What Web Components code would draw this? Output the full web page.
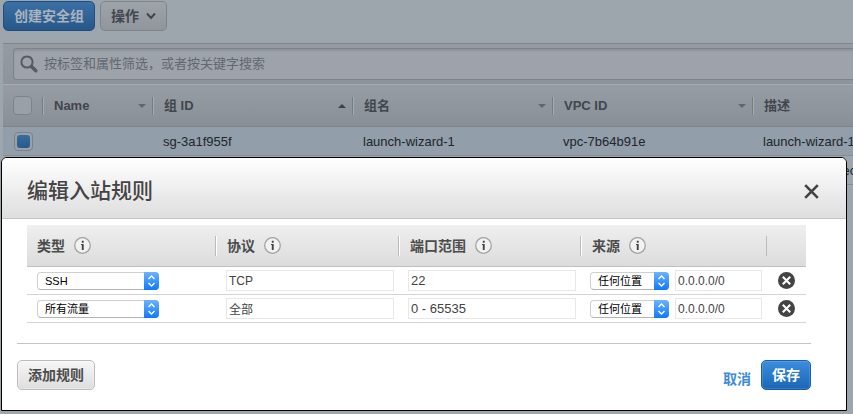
<!DOCTYPE html>
<html lang="zh-CN">
<head>
<meta charset="utf-8">
<title>安全组</title>
<style>
  html, body { margin: 0; height: 100%; }
  body {
    overflow: hidden;
    background: #9ea6ad;
    color: #444;
    font: 13px/20px "Liberation Sans", "Noto Sans CJK SC", sans-serif;
  }
</style>
</head>
<body>
<security-page>
  <action-button slot="actions" tone="dim-primary">创建安全组</action-button>
  <action-button slot="actions" tone="dim" menu>操作</action-button>
  <group-table></group-table>
</security-page>
<rule-dialog heading="编辑入站规则">
  <rule-table></rule-table>
  <action-button slot="start">添加规则</action-button>
  <a slot="end" href="#cancel">取消</a>
  <action-button slot="end" tone="primary">保存</action-button>
</rule-dialog>

<script>
const attach = (el, html) => {
  const t = document.createElement('template');
  t.innerHTML = html;
  el.attachShadow({ mode: 'open' }).append(t.content.cloneNode(true));
};

customElements.define('action-button', class extends HTMLElement {
  connectedCallback() {
    const chevron = this.hasAttribute('menu')
      ? '<svg width="10" height="8" viewBox="0 0 10 8" fill="none" stroke="currentColor" stroke-width="2"><path d="M1 1.5 5 6 9 1.5"/></svg>' : '';
    attach(this, `
      <style>
        :host { display: inline-block; }
        button {
          box-sizing: border-box; height: 30px; padding: 0 10px;
          display: flex; align-items: center; gap: 7px;
          border: 1px solid #bbb; border-radius: 5px;
          background: linear-gradient(#f6f6f6, #dedede);
          box-shadow: inset 0 0 0 1px #ffffff55;
          color: #4c4c4c; font: 700 14px/20px "Liberation Sans", "Noto Sans CJK SC", sans-serif;
          white-space: nowrap;
        }
        :host([tone=primary]) button {
          border-color: #1561ad; background: linear-gradient(#3c8ddd, #1a66b5); color: #fff;
          box-shadow: inset 0 0 0 1px #ffffff22;
        }
        :host([tone=dim]) button {
          border-color: #7f848b; background: linear-gradient(#9fa3aa, #91969d); color: #42474d;
          box-shadow: none;
        }
        :host([tone=dim-primary]) button {
          border-color: #1d4f82; background: linear-gradient(#3b70a6, #265788); color: #a9b3bd;
          box-shadow: none;
        }
      </style>
      <button type="button"><slot></slot>${chevron}</button>`);
  }
});

customElements.define('security-page', class extends HTMLElement {
  connectedCallback() {
    attach(this, `
      <style>
        :host { display: block; padding: 1px 0 0 3px; overflow: hidden; }
        nav { display: flex; gap: 5px; margin-bottom: 12px; }
        .bar { padding: 4px 0 4px 10px; border-top: 1px solid #7f868e; background: linear-gradient(#959ba3, #8d949b); }
        label {
          display: flex; align-items: center; gap: 6px; box-sizing: border-box; height: 32px; padding-left: 6px;
          border: 1px solid #7d838a; border-right: 0; border-radius: 4px 0 0 4px; background: #9ea3ab;
          box-shadow: inset 0 2px 2px #8e939a;
        }
        input {
          flex: 1; min-width: 0; padding: 0; border: 0; outline: 0; background: none; color: #62676d;
          font: 13px/20px "Liberation Sans", "Noto Sans CJK SC", sans-serif;
        }
        input::placeholder { color: #62686f; opacity: 1; }
      </style>
      <nav><slot name="actions"></slot></nav>
      <div class="bar">
        <label>
          <svg width="18" height="18" viewBox="0 0 18 18" fill="none" stroke="#555b62" stroke-linecap="round">
            <circle cx="7" cy="7" r="5.6" stroke-width="2"/><path d="M11.5 11.5 15.8 15.8" stroke-width="3.4"/>
          </svg>
          <input type="text" aria-label="搜索" placeholder="按标签和属性筛选，或者按关键字搜索">
        </label>
      </div>
      <slot></slot>`);
  }
});

customElements.define('group-table', class extends HTMLElement {
  connectedCallback() {
    const head = (name, sort) => `<th><div><span>${name}</span>${sort ? `<i class="${sort}"></i>` : ''}</div></th>`;
    attach(this, `
      <style>
        :host { display: block; }
        table { width: 100%; border-collapse: separate; border-spacing: 0; table-layout: fixed; }
        col.tick { width: 39px; } col.name { width: 110px; } col.wide { width: 200px; }
        th, td { box-sizing: border-box; padding: 0; text-align: left; white-space: nowrap; }
        th {
          height: 43px; background: linear-gradient(#989da5, #888f97);
          border-top: 1px solid #a4aab1; border-bottom: 1px solid #7d848b;
          color: #41464c; font-weight: 700;
        }
        th div {
          display: flex; align-items: center; justify-content: space-between; box-sizing: border-box; height: 18px;
          padding: 0 6px 0 11px; border-left: 1px solid #767c83; box-shadow: inset 1px 0 #a7acb3;
        }
        i { width: 0; border: 4px solid transparent; }
        i.down { border-top-color: #61666d; border-bottom: 0; }
        i.up { border-bottom-color: #3c4147; border-top: 0; }
        td { height: 29px; padding: 1px 0 0 11px; border-bottom: 1px solid #858d95; color: #20262c; }
        tr.on td { background: #929ea9; }
        th:first-child { padding-left: 10px; }
        input {
          appearance: none; display: grid; place-content: center; box-sizing: border-box;
          width: 19px; height: 19px; margin: 0; border: 1px solid #7d838a; border-radius: 4px;
          background: #9aa0a7;
        }
        input:checked::before { content: ""; width: 13px; height: 13px; border-radius: 3px; background: linear-gradient(#386d9f, #28598b); }
      </style>
      <table>
        <colgroup><col class="tick"><col class="name"><col class="wide"><col class="wide"><col class="wide"><col></colgroup>
        <thead><tr><th><input type="checkbox" aria-label="全选"></th>
          ${head('Name', 'down')}${head('组 ID', 'up')}${head('组名', 'down')}${head('VPC ID', 'down')}${head('描述')}</tr></thead>
        <tbody>
          <tr class="on"><td><input type="checkbox" checked aria-label="sg-3a1f955f"></td><td></td><td>sg-3a1f955f</td><td>launch-wizard-1</td><td>vpc-7b64b91e</td><td>launch-wizard-1</td></tr>
          <tr><td></td><td></td><td></td><td></td><td></td><td>default VPC security group</td></tr>
        </tbody>
      </table>`);
  }
});

customElements.define('rule-dialog', class extends HTMLElement {
  connectedCallback() {
    attach(this, `
      <style>
        :host {
          position: absolute; left: 1px; right: 6px; top: 157px; overflow: hidden;
          border: 1px solid #000; border-radius: 6px 6px 0 0; background: #fff;
        }
        header {
          display: flex; align-items: center; justify-content: space-between; box-sizing: border-box; height: 61px;
          padding: 6px 27px 0 25px; border-bottom: 1px solid #c4c4c4; background: linear-gradient(#fff, #dedede);
        }
        h2 { margin: 0; color: #444; font: 500 21px/30px "Liberation Sans", "Noto Sans CJK SC", sans-serif; }
        header button { display: flex; padding: 0; border: 0; background: none; }
        section { padding: 6px 40px 20px 25px; }
        footer {
          display: flex; align-items: center; justify-content: space-between; margin: 0 35px 0 15px; padding: 16px 0 20px;
          border-top: 1px solid #c4c4c4;
        }
        footer div { display: flex; align-items: flex-end; gap: 10px; }
        ::slotted(a) { color: #3d8bdb; font: 700 14px/20px "Noto Sans CJK SC", sans-serif; padding-bottom: 2px; text-decoration: none; }
      </style>
      <header>
        <h2></h2>
        <button type="button" aria-label="关闭"><svg width="15" height="15" viewBox="0 0 15 15" stroke="#444" stroke-width="2.6"><path d="M1.2 1.2 13.8 13.8M13.8 1.2 1.2 13.8"/></svg></button>
      </header>
      <section><slot></slot></section>
      <footer><slot name="start"></slot><div><slot name="end"></slot></div></footer>`);
    this.shadowRoot.querySelector('h2').textContent = this.getAttribute('heading');
  }
});

customElements.define('pick-list', class extends HTMLElement {
  connectedCallback() {
    attach(this, `
      <style>
        :host { display: grid; height: 18px; }
        select, svg { grid-area: 1 / 1; }
        select {
          appearance: none; box-sizing: border-box; width: 100%; height: 18px; margin: 0; padding: 0 16px 0 7px;
          border: 1px solid #cfcfcf; border-bottom-color: #b4b4b4; border-radius: 4px; background: #fff; color: #000;
          font: 11px/16px "Liberation Sans", "Noto Sans CJK SC", sans-serif;
        }
        svg { justify-self: end; pointer-events: none; }
      </style>
      <select aria-label="${this.getAttribute('label')}"><option>${this.getAttribute('value')}</option></select>
      <svg width="15" height="18" viewBox="0 0 15 18">
        <defs><linearGradient id="g" x2="0" y2="1"><stop stop-color="#6cb3fa"/><stop offset="1" stop-color="#0f79fd"/></linearGradient></defs>
        <path d="M0 0H11a4 4 0 0 1 4 4V14a4 4 0 0 1-4 4H0Z" fill="url(#g)"/>
        <path d="M4.5 7 7.5 4 10.5 7M4.5 11 7.5 14 10.5 11" fill="none" stroke="#fff" stroke-width="1.4"/>
      </svg>`);
  }
});

customElements.define('info-mark', class extends HTMLElement {
  connectedCallback() {
    attach(this, `
      <style>:host { display: block; height: 17px; } svg { display: block; }</style>
      <svg width="17" height="17" viewBox="0 0 17 17">
        <circle cx="8.5" cy="8.5" r="7.8" fill="#f2f2f2" stroke="#a2a2a2" stroke-width="1.3"/>
        <path d="M7.8 3.8h1.9v1.9H7.8ZM7 7h2.7v6H7.8V8H7Z" fill="#444"/>
      </svg>`);
  }
});

customElements.define('rule-table', class extends HTMLElement {
  connectedCallback() {
    const head = n => `<th><div>${n}<info-mark></info-mark></div></th>`;
    const row = (type, proto, port) => `
      <tr>
        <td><pick-list class="type" label="类型" value="${type}"></pick-list></td>
        <td><input class="small" aria-label="协议" value="${proto}"></td>
        <td><input aria-label="端口范围" value="${port}"></td>
        <td><div class="source"><pick-list label="来源" value="任何位置"></pick-list><input class="small" aria-label="来源地址" value="0.0.0.0/0"></div></td>
        <td><button type="button" aria-label="删除"><svg width="17" height="17" viewBox="0 0 17 17"><circle cx="8.5" cy="8.5" r="8.5" fill="#444"/><path d="M4.8 4.8 12.2 12.2M12.2 4.8 4.8 12.2" stroke="#fff" stroke-width="2.1"/></svg></button></td>
      </tr>`;
    attach(this, `
      <style>
        :host { display: block; }
        table { width: 100%; border-collapse: separate; border-spacing: 0; table-layout: fixed; }
        col.a { width: 188px; } col.c { width: 182px; } col.d { width: 186px; } col.e { width: 40px; }
        th, td { box-sizing: border-box; padding: 0; text-align: left; }
        th { height: 42px; background: linear-gradient(#efefef, #dcdcdc); border-bottom: 1px solid #c0c0c0; color: #4c4c4c; font-weight: 700; font-size: 14px; }
        th div {
          display: flex; align-items: center; gap: 9px; box-sizing: border-box; height: 20px; padding-left: 11px;
          border-left: 1px solid #bbb; box-shadow: inset 1px 0 #fff;
        }
        th:first-child div { padding-left: 10px; border: 0; box-shadow: none; }
        th:last-child div { box-shadow: none; }
        td { height: 28px; padding: 0 4px 0 10px; border-bottom: 1px solid #d4d4d4; }
        td:nth-child(2) { padding-left: 11px; }
        td:last-child { padding: 0 0 0 12px; }
        .type { width: 122px; }
        .source { display: grid; grid-template-columns: 79px 1fr; gap: 6px; align-items: center; }
        input {
          display: block; box-sizing: border-box; width: 100%; min-width: 0; height: 21px; margin: 0; padding: 0 2px;
          border: 1px solid #e8e8e8; background: #fff; color: #444;
          font: 13px/18px "Liberation Sans", "Noto Sans CJK SC", sans-serif;
        }
        input.small { font-size: 12px; }
        button { display: flex; padding: 0; border: 0; background: none; }
      </style>
      <table>
        <colgroup><col class="a"><col><col class="c"><col class="d"><col class="e"></colgroup>
        <thead><tr>${['类型', '协议', '端口范围', '来源'].map(head).join('')}<th><div></div></th></tr></thead>
        <tbody>${row('SSH', 'TCP', '22')}${row('所有流量', '全部', '0 - 65535')}</tbody>
      </table>`);
  }
});
</script>
</body>
</html>
